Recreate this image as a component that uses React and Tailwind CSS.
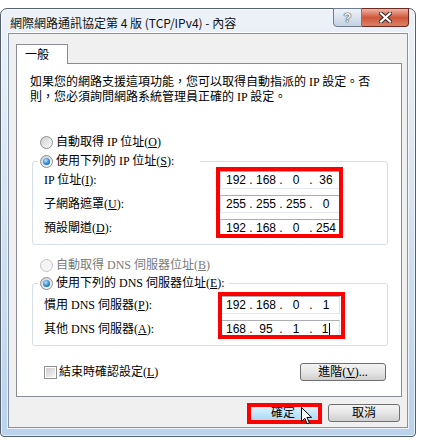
import React, { Fragment } from "react";

const BODY = "font-['Liberation_Serif','Noto_Sans_CJK_TC',serif]";

function Radio({ checked, disabled }) {
  return (
    <span
      className={
        "w-[13px] h-[13px] rounded-full border flex items-center justify-center shrink-0 " +
        (disabled
          ? "border-[#c4c4c4] bg-[#f4f4f4]"
          : "border-[#8e8f8f] bg-gradient-to-br from-[#cfcfcf] to-[#fbfbfb]")
      }
    >
      {checked && (
        <span className="w-[7px] h-[7px] rounded-full bg-[radial-gradient(circle_at_40%_35%,#b8e4ff,#2f86d6_55%,#0c4585)]" />
      )}
    </span>
  );
}

function IpField({ parts, caret }) {
  return (
    <div className="h-[18px] w-[120px] bg-white border border-[#dbdfe6] border-t-[#abadb3] border-b-[#e3e9ef] flex items-center pl-[2px] font-['Liberation_Sans',sans-serif] text-[12px] leading-[16px] text-black">
      {parts.map((p, i) => (
        <Fragment key={i}>
          {i > 0 && <span className="w-[4px] flex justify-center">.</span>}
          <span className="w-[26px] flex justify-center items-center">
            {p}
            {caret && i === 3 && <span className="ml-[1px] w-px h-[12px] bg-black" />}
          </span>
        </Fragment>
      ))}
    </div>
  );
}

function Label({ children }) {
  return <div className="h-[18px] flex items-center">{children}</div>;
}

export default function App() {
  return (
    <div className={"w-[430px] h-[442px] bg-white overflow-hidden text-[12px] text-black " + BODY}>
      <div className="mt-[8px] w-[416px] h-[429px] rounded-t-[7px] rounded-b-[4px] border border-[#56616e] bg-gradient-to-b from-[#edf2f8] via-[#d3e2f2] to-[#bad2ec] flex flex-col shadow-[inset_0_0_0_1px_rgba(255,255,255,0.6)]">
        {/* Title bar */}
        <div className="h-[24px] flex items-start shrink-0">
          <div className="pl-[9px] pt-[6px] leading-[16px] text-[12px] font-['Noto_Sans_CJK_TC',sans-serif] text-[#111] whitespace-nowrap">
            網際網路通訊協定第 4 版 (TCP/IPv4) - 內容
          </div>
          <div className="ml-auto mr-[6px] -mt-px flex">
            <div className="w-[29px] h-[19px] rounded-bl-[4px] border border-[#6f7c8c] bg-gradient-to-b from-[#eef3f9] via-[#d9e3ee] to-[#c3d1e2] flex items-center justify-center">
              <span className="font-['Liberation_Sans',sans-serif] font-bold text-[13px] leading-none text-[#f4f6f8] [text-shadow:0_0_1px_#3a4450,0_0_1px_#3a4450,0_0_1px_#3a4450]">
                ?
              </span>
            </div>
            <div className="w-[47px] h-[19px] rounded-br-[4px] border border-l-0 border-[#6a2a20] bg-gradient-to-b from-[#efb4a5] via-[#cf553b] to-[#d98266] flex items-center justify-center">
              <svg width="13" height="11" viewBox="0 0 13 11">
                <path d="M2 1.5 L11 9.5 M11 1.5 L2 9.5" stroke="#3b2522" strokeWidth="4.2" strokeLinecap="square" />
                <path d="M2 1.5 L11 9.5 M11 1.5 L2 9.5" stroke="#ffffff" strokeWidth="2.2" strokeLinecap="square" />
              </svg>
            </div>
          </div>
        </div>

        {/* Client area */}
        <div className="mx-[7px] h-[395px] bg-[#f0f0f0] border border-[#8394a8] shadow-[0_0_0_1px_rgba(255,255,255,0.7)] pt-[10px] px-[7px] flex flex-col">
          {/* Tab */}
          <div className="relative z-10 -mb-px w-[52px] h-[20px] bg-white border border-b-0 border-[#898c95] pl-[8px] flex items-center">
            一般
          </div>
          {/* Panel */}
          <div className="w-[386px] h-[334px] bg-white border border-[#898c95] flex flex-col">
            <div className="pt-[11px] pl-[13px] leading-[15px] whitespace-nowrap">
              如果您的網路支援這項功能，您可以取得自動指派的 IP 設定。否
              <br />
              則，您必須詢問網路系統管理員正確的 IP 設定。
            </div>

            <div className="mt-[29px] pl-[23px] h-[16px] flex items-center gap-[3px]">
              <Radio />
              <span>
                自動取得 IP 位址(<u>O</u>)
              </span>
            </div>

            <fieldset className="mt-[3px] ml-[15px] w-[356px] border border-[#d5dfe5] rounded-[3px] pt-[2px] pb-[7px]">
              <legend className="ml-[5px] px-[2px] h-[16px]">
                <div className="h-[16px] flex items-center gap-[3px] pr-[24px]">
                  <Radio checked />
                  <span>
                    使用下列的 IP 位址(<u>S</u>):
                  </span>
                </div>
              </legend>
              <div className="flex">
                <div className="w-[187px] pl-[11px] flex flex-col gap-[6px]">
                  <Label>
                    IP 位址(<u>I</u>):
                  </Label>
                  <Label>
                    子網路遮罩(<u>U</u>):
                  </Label>
                  <Label>
                    預設閘道(<u>D</u>):
                  </Label>
                </div>
                <div className="relative flex flex-col gap-[6px]">
                  <IpField parts={["192", "168", "0", "36"]} />
                  <IpField parts={["255", "255", "255", "0"]} />
                  <IpField parts={["192", "168", "0", "254"]} />
                  <div className="absolute -left-[4px] -right-[3px] -top-[4px] -bottom-[1px] border-4 border-[#ff0000] pointer-events-none" />
                </div>
              </div>
            </fieldset>

            <div className="mt-[12px] pl-[23px] h-[16px] flex items-center gap-[3px] text-[#7a7a7a]">
              <Radio disabled />
              <span>
                自動取得 DNS 伺服器位址(<u>B</u>)
              </span>
            </div>

            <fieldset className="mt-[2px] ml-[15px] w-[356px] border border-[#d5dfe5] rounded-[3px] pt-[5px] pb-[7px]">
              <legend className="ml-[5px] px-[2px] h-[16px]">
                <div className="h-[16px] flex items-center gap-[3px] pr-[2px]">
                  <Radio checked />
                  <span>
                    使用下列的 DNS 伺服器位址(<u>E</u>):
                  </span>
                </div>
              </legend>
              <div className="flex">
                <div className="w-[187px] pl-[11px] flex flex-col gap-[6px]">
                  <Label>
                    慣用 DNS 伺服器(<u>P</u>):
                  </Label>
                  <Label>
                    其他 DNS 伺服器(<u>A</u>):
                  </Label>
                </div>
                <div className="relative flex flex-col gap-[6px]">
                  <IpField parts={["192", "168", "0", "1"]} />
                  <IpField parts={["168", "95", "1", "1"]} caret />
                  <div className="absolute -left-[2px] -right-[5px] -top-[4px] -bottom-[1px] border-4 border-[#ff0000] pointer-events-none" />
                </div>
              </div>
            </fieldset>

            <div className="mt-[17px] h-[18px] pl-[27px] pr-[15px] flex items-center justify-between">
              <div className="flex items-center gap-[2px]">
                <span className="w-[13px] h-[13px] border border-[#8e8f8f] bg-white flex items-center justify-center">
                  <span className="w-[9px] h-[9px] bg-gradient-to-br from-[#cdcdcd] to-[#f6f6f6]" />
                </span>
                <span>
                  結束時確認設定(<u>L</u>)
                </span>
              </div>
              <button className="w-[86px] h-[18px] rounded-[3px] border border-[#707070] bg-gradient-to-b from-[#f4f4f4] via-[#e6e6e6] to-[#cfcfcf] flex items-center justify-center leading-none">
                進階(<u>V</u>)...
              </button>
            </div>
          </div>

          {/* Bottom buttons */}
          <div className="mt-[7px] flex justify-end gap-[6px]">
            <div className="relative">
              <button className="w-[72px] h-[18px] rounded-[3px] border border-[#3c7fb1] bg-gradient-to-b from-[#eaf6fd] via-[#c4e7fb] to-[#a7d9f5] flex items-center justify-center leading-none pr-[6px]">
                確定
              </button>
              <div className="absolute -left-[3px] right-0 -top-[1px] -bottom-[2px] border-4 border-[#ff0000] pointer-events-none" />
              <svg className="absolute left-[51px] top-[3px]" width="13" height="18" viewBox="0 0 13 18">
                <path d="M0.5 0.5 L0.5 14.5 L3.8 11.3 L6.2 16.8 L8.4 15.8 L6 10.4 L10.6 10.4 Z" fill="#ffffff" stroke="#000000" strokeWidth="1" strokeLinejoin="miter" />
              </svg>
            </div>
            <button className="w-[72px] h-[18px] rounded-[3px] border border-[#707070] bg-gradient-to-b from-[#f4f4f4] via-[#e6e6e6] to-[#cfcfcf] flex items-center justify-center leading-none">
              取消
            </button>
          </div>
        </div>
      </div>
    </div>
  );
}
